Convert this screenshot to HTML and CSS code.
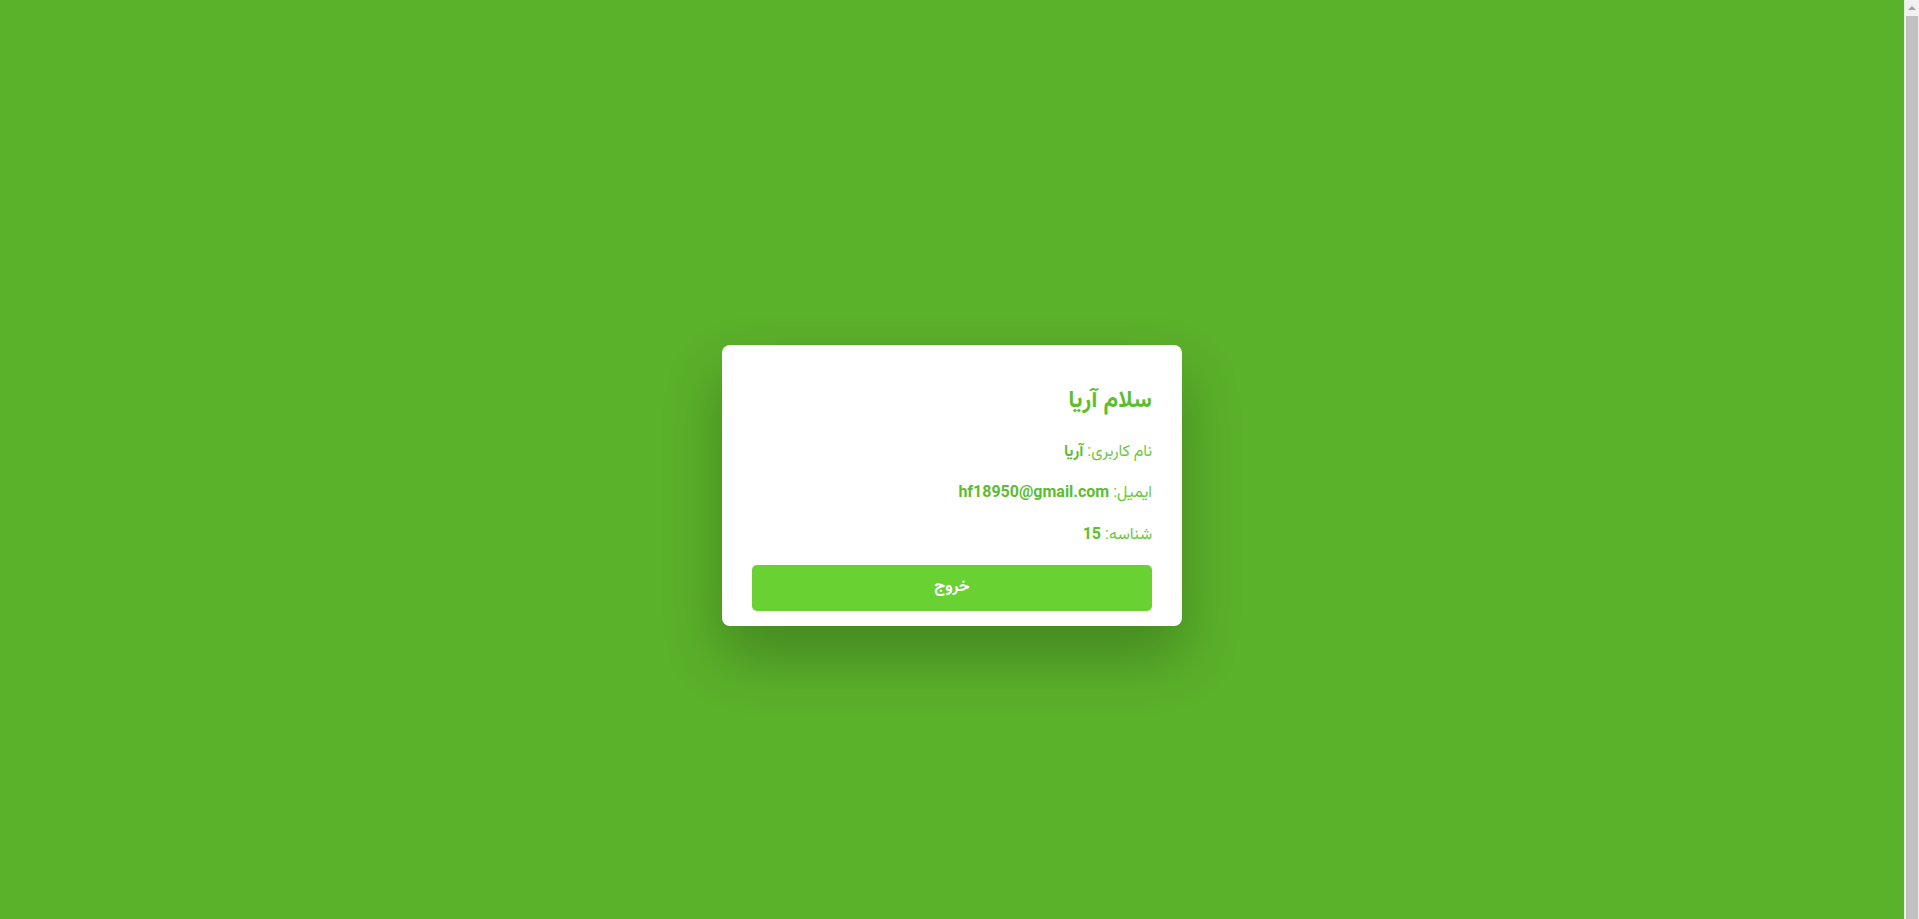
FILE: index.html
```html
<!DOCTYPE html>
<html lang="fa" dir="rtl">
<head>
<meta charset="utf-8">
<title>پروفایل</title>
<link rel="stylesheet" href="styles.css">
</head>
<body>
<div class="page">
  <div class="card">
    <h2 class="title">سلام آریا</h2>
    <p class="row">نام کاربری: <strong>آریا</strong></p>
    <p class="row">ایمیل: <strong>hf18950@gmail.com</strong></p>
    <p class="row row-last">شناسه: <strong>15</strong></p>
    <button class="logout" type="button">خروج</button>
  </div>
</div>
<div class="scrollbar" aria-hidden="true">
  <div class="scroll-btn"><span class="scroll-arrow"></span></div>
  <div class="scroll-thumb"></div>
</div>
</body>
</html>
```

FILE: styles.css
```css
html, body {
  margin: 0;
  padding: 0;
}
body {
  background: #5ab12a;
  font-family: Roboto, "Vazirmatn", "Noto Sans Arabic", "Noto Naskh Arabic", "DejaVu Sans", sans-serif;
}
.page {
  min-height: 100vh;
  margin-right: 15px;
  padding-top: 26px;
  display: flex;
  align-items: center;
  justify-content: center;
}
.card {
  width: 400px;
  padding: 35px 30px 15px;
  background: #ffffff;
  border-radius: 8px;
  box-shadow: 0 30px 60px rgba(0, 0, 0, 0.24);
  text-align: right;
}
.title {
  margin: 0 0 19px;
  font-size: 24px;
  font-weight: 700;
  line-height: 1.6;
  color: #5dbf2f;
}
.row {
  margin: 0 0 16px;
  font-size: 16px;
  line-height: 1.6;
  color: #6cc83e;
}
.row-last {
  margin-bottom: 18px;
}
.row strong {
  color: #5cbd2e;
  font-weight: 700;
}
.logout {
  display: block;
  width: 100%;
  height: 46px;
  border: none;
  border-radius: 5px;
  background: #6ad133;
  color: #ffffff;
  font-family: inherit;
  font-size: 16px;
  font-weight: 700;
  cursor: pointer;
}
.scrollbar {
  position: fixed;
  top: 0;
  right: 0;
  width: 15px;
  height: 100vh;
  background: #f1f1f1;
  border-left: 1px solid #e8e8e8;
  box-sizing: border-box;
  display: flex;
  flex-direction: column;
}
.scroll-btn {
  height: 16px;
  display: flex;
  align-items: center;
  justify-content: center;
}
.scroll-arrow {
  width: 0;
  height: 0;
  border-left: 4px solid transparent;
  border-right: 4px solid transparent;
  border-bottom: 4px solid #a3a3a3;
}
.scroll-thumb {
  flex: 1;
  margin: 0 1px 0 1px;
  background: #c1c1c1;
}
```
